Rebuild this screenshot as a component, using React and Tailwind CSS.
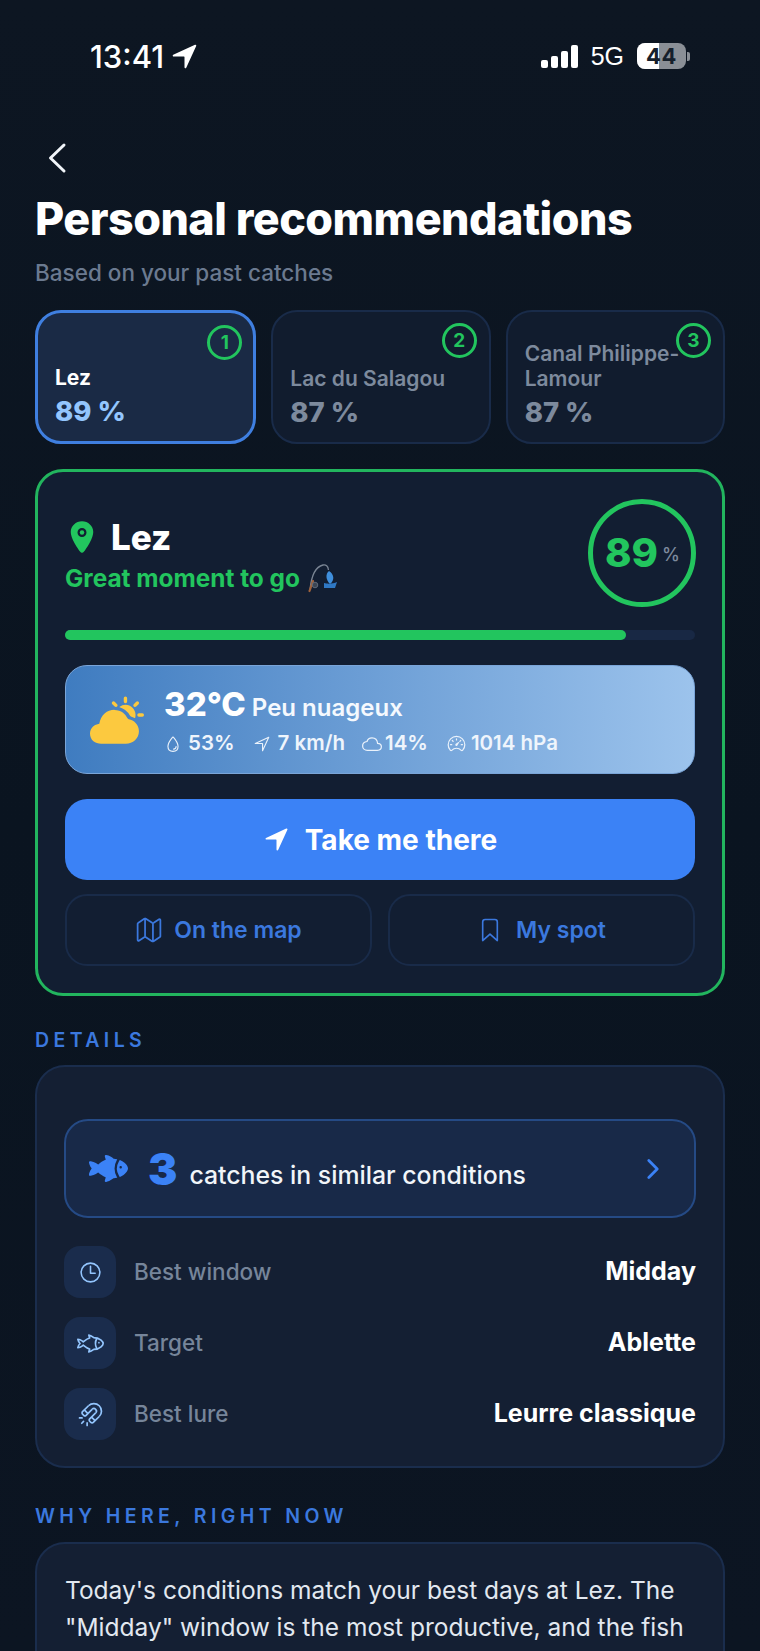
import React from "react";
import {
  IoLocation, IoNavigate, IoNavigateOutline, IoWaterOutline, IoCloudOutline, IoSpeedometerOutline,
  IoMapOutline, IoBookmarkOutline, IoTimeOutline, IoFish, IoFishOutline, IoMagnetOutline,
  IoPartlySunny, IoChevronForward,
} from "react-icons/io5";

function Chevron() {
  return (
    <svg width="20" height="32" viewBox="0 0 20 32" fill="none" stroke="#f1f5f9" strokeWidth="3" strokeLinecap="round" strokeLinejoin="round">
      <path d="M17 3 L3.5 16 L17 29" />
    </svg>
  );
}

function Signal() {
  return (
    <div className="flex items-end gap-[3px] h-[23px]">
      <div className="w-[7px] h-[8px] rounded-[2px] bg-white" />
      <div className="w-[7px] h-[12px] rounded-[2px] bg-white" />
      <div className="w-[7px] h-[17px] rounded-[2px] bg-white" />
      <div className="w-[7px] h-[23px] rounded-[2px] bg-white" />
    </div>
  );
}

function Battery() {
  return (
    <div className="flex items-center gap-[1px]">
      <div className="relative w-[49px] h-[26px] rounded-[8px] overflow-hidden bg-[#8a8f96] flex items-center justify-center">
        <div className="absolute left-0 top-0 bottom-0 w-[22px] bg-white" />
        <span className="relative text-[22px] font-bold leading-none text-[#16202c] tracking-[0.5px]">44</span>
      </div>
      <div className="w-[3px] h-[9px] rounded-r-[2px] bg-[#8a8f96]" />
    </div>
  );
}

function Tab({ active, name, pct, n }) {
  return (
    <div className={`relative flex-1 h-[134px] rounded-[26px] px-[17px] flex flex-col justify-end pb-[11px] ${active ? "border-[3px] border-[#3f7fe0] bg-[#1a2a45]" : "border-2 border-[#192b49] bg-[#111c2e]"}`}>
      <div className={`absolute w-[35px] h-[35px] rounded-full border-[3px] border-[#22c55e] flex items-center justify-center text-[#22c55e] text-[19px] font-bold leading-none ${active ? "right-[11px] top-[12px]" : "right-[12px] top-[11px]"}`}>{n}</div>
      <div className={`text-[21px] leading-[25px] ${active ? "font-bold text-white" : "font-semibold text-[#7d8a9d]"}`}>{name}</div>
      <div className={`text-[27.5px] leading-[37px] mt-[3px] font-extrabold ${active ? "text-[#93c5fd]" : "text-[#7d8a9d]"}`}>{pct}</div>
    </div>
  );
}

function Stat({ icon, text, gap }) {
  return (
    <div className={`flex items-center ${gap}`}>
      {icon}
      <span className="text-[20.5px] font-semibold text-[#eff5fc] leading-none">{text}</span>
    </div>
  );
}

function Row({ icon, label, value }) {
  return (
    <div className="flex items-center h-[52px]">
      <div className="w-[52px] h-[52px] rounded-[16px] bg-[#1a2c4c] flex items-center justify-center text-[#93c5fd]">{icon}</div>
      <div className="ml-[18px] text-[22.5px] text-[#76859a] font-medium">{label}</div>
      <div className="ml-auto text-[25px] font-bold text-white">{value}</div>
    </div>
  );
}

function RodFish() {
  return (
    <svg width="32" height="30" viewBox="0 0 32 30" fill="none">
      <path d="M2 27 C3 16 6 4 15 2 C18 1.5 20 3 20.5 7" stroke="#7a8594" strokeWidth="1.3" />
      <path d="M1.5 28 L5 18" stroke="#a0623c" strokeWidth="2.2" strokeLinecap="round" />
      <circle cx="7" cy="22" r="2.8" fill="#3d4654" stroke="#6b7584" strokeWidth="0.8" />
      <path d="M21 8 C26 11 27 17 22 21 C18 17 17 11 21 8 Z" fill="#3f8fdc" />
      <path d="M16 20 C19 21 25 21 29 19 L27 25 L16 25 Z" fill="#2f78c4" />
    </svg>
  );
}

export default function App() {
  return (
    <div className="h-[1651px] w-[760px] overflow-hidden bg-gradient-to-b from-[#0d1622] via-[#0a1420] to-[#0c1522] font-['Inter',sans-serif] text-white">
      <div className="h-[112px] flex items-center pl-[90px] pr-[70px]">
        <span className="text-[31px] font-medium leading-none">13:41</span>
        <IoNavigate className="ml-[6px] text-white" size={29} />
        <div className="ml-auto flex items-center">
          <Signal />
          <span className="ml-[13px] mr-[13px] text-[25px] font-medium font-['Liberation_Sans',sans-serif] leading-none">5G</span>
          <Battery />
        </div>
      </div>

      <div className="px-[35px]">
        <div className="h-[82px] pt-[30px] pl-[12px]"><Chevron /></div>
        <h1 className="text-[44.8px] leading-[50px] font-extrabold tracking-[-0.5px] whitespace-nowrap">Personal recommendations</h1>
        <p className="mt-[14px] text-[22.5px] leading-[30px] text-[#6b7a90] font-medium">Based on your past catches</p>

        <div className="mt-[22px] flex gap-[15px]">
          <Tab active name="Lez" pct="89 %" n="1" />
          <Tab name="Lac du Salagou" pct="87 %" n="2" />
          <Tab name={<>Canal Philippe-<br />Lamour</>} pct="87 %" n="3" />
        </div>

        <div className="mt-[25px] h-[527px] rounded-[28px] border-[3px] border-[#22b55e] bg-[#121e32] px-[27px] pt-[27px]">
          <div className="flex justify-between h-[106px]">
            <div>
              <div className="flex items-center h-[48px] mt-[14px]">
                <IoLocation className="text-[#22c55e] -ml-[1px]" size={36} />
                <span className="ml-[11px] text-[35px] font-extrabold leading-none">Lez</span>
              </div>
              <div className="flex items-center mt-[2px]">
                <span className="text-[24.4px] font-bold text-[#22c55e] leading-[30px]">Great moment to go</span>
                <span className="ml-[8px]"><RodFish /></span>
              </div>
            </div>
            <div className="w-[108px] h-[108px] rounded-full border-[5px] border-[#22c55e] flex items-center justify-center pl-[1px] -mr-[1px]">
              <span className="text-[40px] font-extrabold text-[#22c55e] leading-none">89</span>
              <span className="ml-[4px] mt-[4px] text-[18px] font-medium text-[#7d8a9d] leading-none">%</span>
            </div>
          </div>

          <div className="mt-[25px] h-[10px] rounded-full bg-[#182844]">
            <div className="h-full w-[89%] rounded-full bg-[#22c55e]" />
          </div>

          <div className="mt-[25px] h-[109px] rounded-[22px] border border-[#7aa5d8] bg-gradient-to-r from-[#3f7cc0] to-[#9cc3ec] flex items-center pl-[24px]">
            <IoPartlySunny className="text-[#fcc93f]" size={54} />
            <div className="ml-[20px]">
              <div className="flex items-baseline h-[38px]">
                <span className="text-[33px] font-extrabold leading-[38px]">32°C</span>
                <span className="ml-[6px] text-[24px] font-semibold leading-[38px] text-[#f5f9fe]">Peu nuageux</span>
              </div>
              <div className="flex items-center mt-[10px]">
                <Stat gap="gap-[6px]" icon={<IoWaterOutline size={18} className="text-[#eaf2fb]" />} text="53%" />
                <Stat gap="gap-[7px] ml-[18px]" icon={<IoNavigateOutline size={18} className="text-[#eaf2fb]" />} text="7 km/h" />
                <Stat gap="gap-[3px] ml-[17px]" icon={<IoCloudOutline size={20} className="text-[#eaf2fb]" />} text="14%" />
                <Stat gap="gap-[5px] ml-[19px]" icon={<IoSpeedometerOutline size={19} className="text-[#eaf2fb]" />} text="1014 hPa" />
              </div>
            </div>
          </div>

          <div className="mt-[25px] h-[81px] rounded-[22px] bg-[#3b82f6] flex items-center justify-center gap-[15px]">
            <IoNavigate size={27} className="text-white" />
            <span className="text-[28px] font-bold leading-none">Take me there</span>
          </div>

          <div className="mt-[14px] flex gap-[16px]">
            <div className="flex-1 h-[72px] rounded-[22px] border-2 border-[#192b49] flex items-center justify-center gap-[11px] text-[#3b78de]">
              <IoMapOutline size={28} />
              <span className="text-[23px] font-semibold leading-none">On the map</span>
            </div>
            <div className="flex-1 h-[72px] rounded-[22px] border-2 border-[#192b49] flex items-center justify-center gap-[13px] text-[#3b78de]">
              <IoBookmarkOutline size={26} />
              <span className="text-[23px] font-semibold leading-none">My spot</span>
            </div>
          </div>
        </div>

        <div className="mt-[31px] h-[26px] text-[19.5px] font-semibold tracking-[4.4px] leading-[26px] text-[#3b78de]">DETAILS</div>

        <div className="mt-[12px] h-[403px] rounded-[30px] border-2 border-[#1a2d4d] bg-[#141f33] px-[27px] pt-[52px]">
          <div className="h-[99px] rounded-[24px] border-2 border-[#254a85] bg-[#182948] flex items-center pl-[23px] pr-[26px]">
            <IoFish size={39} className="text-[#3b82f6]" />
            <span className="ml-[20px] text-[44px] font-black leading-none text-[#3b82f6]">3</span>
            <span className="ml-[12px] mt-[13px] text-[24.8px] font-medium leading-none text-[#f1f5f9]">catches in similar conditions</span>
            <IoChevronForward size={30} className="ml-auto text-[#3b82f6]" />
          </div>
          <div className="mt-[28px] flex flex-col gap-[19px]">
            <Row icon={<IoTimeOutline size={25} />} label="Best window" value="Midday" />
            <Row icon={<IoFishOutline size={27} />} label="Target" value="Ablette" />
            <Row icon={<IoMagnetOutline size={27} />} label="Best lure" value="Leurre classique" />
          </div>
        </div>

        <div className="mt-[35px] h-[26px] text-[19.5px] font-semibold tracking-[4.4px] leading-[26px] text-[#3b78de]">WHY HERE, RIGHT NOW</div>

        <div className="mt-[13px] h-[300px] rounded-[30px] border-2 border-[#1a2d4d] bg-[#141f33] pl-[28px] pr-[18px] pt-[28px]">
          <p className="text-[24.5px] leading-[36.5px] text-[#e2e8f0] font-normal">
            Today's conditions match your best days at Lez. The "Midday" window is the most productive, and the fish
          </p>
        </div>
      </div>
    </div>
  );
}
